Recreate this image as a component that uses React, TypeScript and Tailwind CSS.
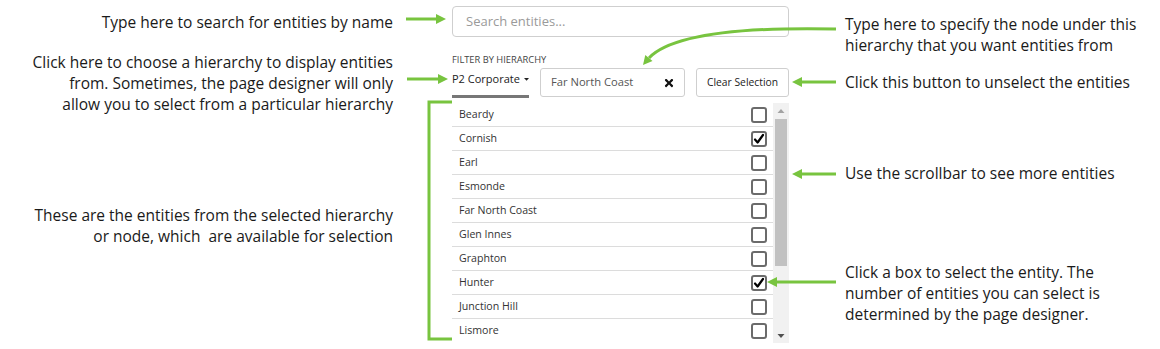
import { FaTimes } from "react-icons/fa";

const entities = [
    { name: "Beardy", checked: false },
    { name: "Cornish", checked: true },
    { name: "Earl", checked: false },
    { name: "Esmonde", checked: false },
    { name: "Far North Coast", checked: false },
    { name: "Glen Innes", checked: false },
    { name: "Graphton", checked: false },
    { name: "Hunter", checked: true },
    { name: "Junction Hill", checked: false },
    { name: "Lismore", checked: false },
];

const GREEN = "#78c43f";

const CheckBox = ({ checked }: { checked: boolean }) => (
    <div className="w-[16px] h-[16px] rounded-[3px] border-2 border-[#6b6b6b] bg-white flex items-center justify-center">
        {checked && (
            <svg width="12" height="12" viewBox="0 0 12 12">
                <path d="M2 6.5 L4.6 9.5 L10 2" fill="none" stroke="#000" strokeWidth="2.2" strokeLinecap="round" strokeLinejoin="round" />
            </svg>
        )}
    </div>
);

// green arrows + bracket drawn on top of the page
const Overlay = () => (
    <svg className="absolute inset-0 pointer-events-none" width="1160" height="349" viewBox="0 0 1160 349">
        <g stroke={GREEN} strokeWidth="3" fill="none">
            <line x1="406" y1="19" x2="437" y2="19" />
            <line x1="407" y1="79" x2="439" y2="79" />
            <line x1="801" y1="82" x2="836" y2="82" />
            <line x1="801" y1="174" x2="836" y2="174" />
            <line x1="776" y1="282" x2="836" y2="282" />
            <path d="M836 29 C 745 27, 672 34, 649 58" />
            <path d="M452 102 L429 102 L429 339 L452 339" />
        </g>
        <g fill={GREEN}>
            <polygon points="446,19 436,14 436,24" />
            <polygon points="448,79 438,74 438,84" />
            <polygon points="792,82 802,77 802,87" />
            <polygon points="792,174 802,169 802,179" />
            <polygon points="767,282 777,277 777,287" />
            <polygon points="643,65 652.5,61 645.3,55" />
        </g>
    </svg>
);

const EntityPicker = () => (
    <div className="w-[337px] flex flex-col text-[#333]">
        <div className="mt-[6px] h-[31px] border border-[#cfcfcf] rounded-[4px] flex items-center px-[13px]">
            <span className="text-[13px] text-[#9a9a9a]">Search entities...</span>
        </div>
        <div className="mt-[17px] text-[9.3px] leading-[12px] text-[#444] whitespace-nowrap">FILTER BY HIERARCHY</div>
        <div className="flex items-start mt-[2px]">
            <div className="w-[77px] h-[30px] border-b-[3px] border-[#777] flex items-start pt-[3px] whitespace-nowrap">
                <span className="text-[11px] leading-[16px] text-[#222]">P2 Corporate</span>
                <svg className="ml-[4px] mt-[6px]" width="8" height="5" viewBox="0 0 8 5"><polygon points="0,0 8,0 4,4.5" fill="#222" /></svg>
            </div>
            <div className="ml-[11px] w-[145px] h-[29px] border border-[#cfcfcf] rounded-[3px] flex items-center justify-between pl-[10px] pr-[9px]">
                <span className="text-[11.2px] text-[#555]">Far North Coast</span>
                <FaTimes className="text-[12px] text-[#111]" />
            </div>
            <button className="ml-[11px] w-[93px] h-[29px] border border-[#cfcfcf] rounded-[3px] bg-white text-[10.3px] text-[#222] whitespace-nowrap">
                Clear Selection
            </button>
        </div>
        <div className="mt-[5px] flex h-[240px]">
            <div className="flex-1 flex flex-col">
                {entities.map((item, i) => (
                    <div
                        key={item.name}
                        className={`h-[24px] flex items-center justify-between pl-[7px] pr-[6px] ${i < entities.length - 1 ? "border-b border-[#dcdcdc]" : ""}`}
                    >
                        <span className="text-[10.6px] text-[#333]">{item.name}</span>
                        <CheckBox checked={item.checked} />
                    </div>
                ))}
            </div>
            <div className="w-[16px] bg-[#f1f1f1] flex flex-col items-center">
                <svg width="16" height="16" viewBox="0 0 16 16"><polygon points="4.5,10 11.5,10 8,6" fill="#a3a3a3" /></svg>
                <div className="w-[12px] h-[147px] bg-[#c1c1c1]" />
                <div className="flex-1" />
                <svg width="16" height="16" viewBox="0 0 16 16"><polygon points="4.5,7 11.5,7 8,11" fill="#505050" /></svg>
            </div>
        </div>
    </div>
);

export default function App() {
    return (
        <div className="relative w-[1160px] h-[349px] bg-white overflow-hidden" style={{ fontFamily: '"Open Sans", "Noto Sans", sans-serif' }}>
            <div className="flex">
                <div className="w-[393px] text-right text-[15.5px] leading-[21px] text-[#1a1a1a] whitespace-nowrap">
                    <p className="mt-[12px]">Type here to search for entities by name</p>
                    <p className="mt-[19px]">Click here to choose a hierarchy to display entities<br />from. Sometimes, the page designer will only<br />allow you to select from a particular hierarchy</p>
                    <p className="mt-[90px]">These are the entities from the selected hierarchy<br />or node, which&nbsp; are available for selection</p>
                </div>
                <div className="ml-[59px]">
                    <EntityPicker />
                </div>
                <div className="ml-[56px] text-[15.5px] leading-[21px] text-[#1a1a1a] whitespace-nowrap">
                    <p className="mt-[14px]">Type here to specify the node under this<br />hierarchy that you want entities from</p>
                    <p className="mt-[16px]">Click this button to unselect the entities</p>
                    <p className="mt-[70px]">Use the scrollbar to see more entities</p>
                    <p className="mt-[78px]">Click a box to select the entity. The<br />number of entities you can select is<br />determined by the page designer.</p>
                </div>
            </div>
            <Overlay />
        </div>
    );
}
